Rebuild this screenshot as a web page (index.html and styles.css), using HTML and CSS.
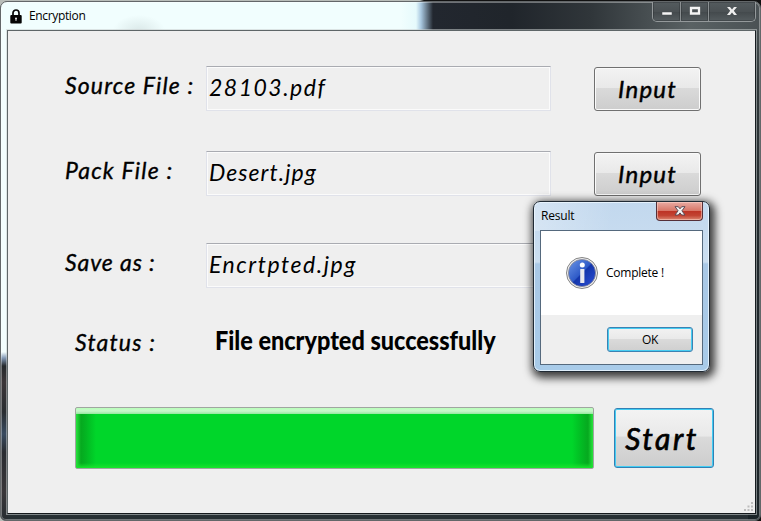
FILE: index.html
```html
<!DOCTYPE html>
<html lang="en">
<head>
<meta charset="utf-8">
<title>Encryption</title>
<link rel="stylesheet" href="styles.css">
</head>
<body>
<div class="window">
  <header class="titlebar">
    <svg class="lock" width="12" height="15" viewBox="0 0 12 15"><path d="M3 7V4a3 3 0 0 1 6 0v3" fill="none" stroke="#050505" stroke-width="1.7"/><rect x=".3" y="6" width="11.4" height="8.4" rx="1" fill="#050505"/><circle cx="6" cy="9.5" r="1" fill="#eee"/><path d="M5.5 10h1v2h-1z" fill="#ccc"/></svg>
    <span class="caption c-main">Encryption</span>
    <div class="controls">
      <span class="ctl"><svg width="12" height="14" viewBox="0 0 12 14"><path d="M1 10h10v3H1z" fill="#f4f4f4" stroke="#454b4f" stroke-width=".5"/></svg></span>
      <span class="ctl"><svg width="12" height="14" viewBox="0 0 12 14"><path d="M2 6h8v5.500H2z" fill="none" stroke="#f4f4f4" stroke-width="2.300"/></svg></span>
      <span class="ctl wide"><svg width="12" height="14" viewBox="0 0 12 14"><path d="M1 5h3l2 2.400L8 5h3L7.800 8.800 11 13H8L6 10.500 4 13H1l3.200-4.200z" fill="#eee"/></svg></span>
    </div>
  </header>
  <main class="client">
    <div class="row r1"><label class="label l1">Source File :</label><div class="field"><span class="v1">28103.pdf</span></div><button class="btn">Input</button></div>
    <div class="row r2"><label class="label l2">Pack File :</label><div class="field"><span class="v2">Desert.jpg</span></div><button class="btn">Input</button></div>
    <div class="row r3"><label class="label l3">Save as :</label><div class="field"><span class="v3">Encrtpted.jpg</span></div></div>
    <div class="status"><label class="label l4">Status :</label><span class="message">File encrypted successfully</span></div>
    <div class="action"><div class="progress"></div><button class="btn start">Start</button></div>
    <svg class="grip" width="9" height="9" viewBox="0 0 9 9"><path d="M7 0h2v2H7zM7 3.500h2v2H7zM3.500 3.500h2v2h-2zM7 7h2v2H7zM3.500 7h2v2h-2zM0 7h2v2H0z" fill="#bdbdbd"/></svg>
  </main>
</div>
<section class="dialog">
  <header class="dialog-bar"><span class="caption c-result">Result</span>
    <span class="close"><svg width="12" height="10" viewBox="0 0 12 10"><path d="M1 .7h3.300L6 2.800 7.700.7H11L7.900 4.800 11 9H7.700L6 6.900 4.300 9H1l3.100-4.200z" fill="#f4f4f4" stroke="#5c4b55" stroke-width="1"/></svg></span></header>
  <div class="dialog-client">
    <div class="dialog-body">
      <svg width="32" height="32" viewBox="0 0 32 32">
        <defs><linearGradient id="blue" x2="1" y2="1"><stop offset="0" stop-color="#6f98e6"/><stop offset=".48" stop-color="#2f5bc8"/><stop offset=".52" stop-color="#1436ab"/><stop offset="1" stop-color="#2d50d6"/></linearGradient></defs>
        <circle cx="16" cy="16" r="15.500" fill="#f1f1f1" stroke="#777" stroke-width=".9"/><circle cx="16" cy="16" r="13.600" fill="url(#blue)" stroke="#8a8a96" stroke-width=".8"/>
        <circle cx="16.300" cy="8" r="2.500" fill="#fff"/><rect x="14.200" y="12" width="4.200" height="14" rx=".6" fill="#e9e9ee"/>
      </svg>
      <span class="caption c-msg">Complete !</span>
    </div>
    <footer class="dialog-foot"><button class="ok">OK</button></footer>
  </div>
</section>
</body>
</html>
```
FILE: styles.css
```css
* { box-sizing: border-box; }
body {
  margin: 0; width: 761px; height: 521px; overflow: hidden; position: relative;
  background: linear-gradient(90deg, #b9bdb9 0 420px, #111 424px);
}
.window {
  margin-top: 1px; width: 761px; height: 520px; padding: 0 4px 6px 6px;
  border: 1px solid #636769; border-radius: 7px 7px 6px 6px;
  background:
    radial-gradient(ellipse 26px 16px at 138px 29px, rgba(200,215,215,.55), transparent) 0 0 / 100% 29px no-repeat,
    linear-gradient(90deg, #f1fefe 0 400px, #e6fafc 415px, #a9c8e0 420px, #22272f 432px, #20252b 510px, #30363a 590px, #596163 690px, #4a5154 761px) 0 0 / 100% 29px no-repeat,
    linear-gradient(#525a5c, #30383a 80px, #20282c 260px, #1b2428 100%) 100% 0 / 12px 100% no-repeat,
    linear-gradient(#f2fdfd 0 350px, #8298b5 356px, #25292c 364px, #3b3538 380px, #292d31 410px, #394b60 432px, #292c31 450px, #393639 490px, #272d31) 0 0 / 7px 100% no-repeat,
    #272f33;
  box-shadow: inset 0 0 0 1px rgba(255,255,255,.35);
}
.titlebar { height: 28px; display: flex; align-items: flex-start; padding-left: 3px; }
.lock { margin: 7px 7px 0 0; }
.caption { font: 12px/16px "Open Sans", "Noto Sans", sans-serif; color: #000; white-space: nowrap; }
.c-main { margin-top: 6px; letter-spacing: -.35px; }
.controls { margin: 0 0 0 auto; width: 104px; height: 20px; display: flex; border: 1px solid #94999b; border-top: 0; border-radius: 0 0 5px 5px; overflow: hidden; background: linear-gradient(#545b5e, #4b5154 50%, #43494c 51%, #555c5f); }
.ctl { width: 28px; display: flex; justify-content: center; border-right: 1px solid #8b9092; box-shadow: inset 0 0 0 1px rgba(30,34,36,.3); }
.ctl.wide { flex: 1; border: 0; }
.client {
  position: relative; width: 749px; height: 484px; border: 1px solid #6b7375; border-color: #5e6668 #161c20 #15191c #5e6668;
  outline: 1px solid rgba(200,205,206,.55); outline-offset: 0;
  background: #efefef; padding: 35px 0 0 57px; font-family: Lato, "Open Sans", sans-serif; color: #000;
}
.row { display: grid; grid-template-columns: 141px 345px 107px; height: 45px; }
.row .btn { margin: 1px -43px 0 43px; }
.r1 { margin-bottom: 40px; }
.r2 { margin-bottom: 47px; }
.r3 { margin-bottom: 34px; }
.label { font-style: italic; font-weight: 400; font-size: 23px; line-height: 30px; white-space: nowrap; align-self: start; -webkit-text-stroke: .35px #000; }
.row .label { margin-top: 4px; }
.l1 { letter-spacing: 1.15px; }
.l2 { letter-spacing: 1.2px; }
.l3 { letter-spacing: .9px; }
.l4 { letter-spacing: 1.2px; }
.field { border: 1px solid #e0e2ea; border-top-color: #a9abb1; box-shadow: inset 0 0 0 1px #fbfbfb; padding: 5px 0 0 2px; font-size: 23px; line-height: 30px; font-style: italic; white-space: nowrap; }
.v1 { letter-spacing: 1.5px; }
.v2 { letter-spacing: 1.05px; }
.v3 { letter-spacing: 1.55px; }
.btn {
  width: 107px; height: 44px; border: 1px solid #707070; border-radius: 3px; padding: 0;
  background: linear-gradient(#f3f3f3, #e9e9e9 47%, #dadada 48%, #cdcdcd); box-shadow: inset 0 0 0 1px #fafafa;
  font: italic 400 24px/30px Lato, sans-serif; -webkit-text-stroke: .45px #000; letter-spacing: 1.2px; color: #000;
}
.status { display: flex; height: 36px; padding-left: 10px; margin-bottom: 49px; }
.l4 { width: 140px; margin-top: 5px; }
.message { font: 900 27px/36px Lato, sans-serif; transform: scaleX(.868); transform-origin: 0 50%; white-space: nowrap; }
.action { display: flex; align-items: flex-start; padding-left: 10px; gap: 20px; }
.progress {
  width: 519px; height: 62px; border: 1px solid #a0a6a0; border-radius: 2px;
  background: linear-gradient(#b9ffba, #c8f6cb 3px, #96e79f 6px, transparent 6px), linear-gradient(transparent 55px, #18e52c 60px), linear-gradient(90deg, #28e43e, #06a91f 5px, #03b622 10px, #00d62a 20px, #00d62a 496px, #03b622 507px, #06a91f 512px, #28e43e);
}
.btn.start { width: 100px; height: 60px; margin-top: 1px; border-color: #3280b4; box-shadow: inset 0 0 0 1px #42cdf3; font-size: 30px; -webkit-text-stroke-width: .7px; letter-spacing: 2.5px; padding-right: 4px; }
.grip { position: absolute; right: 2px; bottom: 2px; }
.dialog {
  position: absolute; left: 533px; top: 201px; width: 177px; height: 171px; padding: 0 6px 6px;
  border: 1px solid #202a34; border-radius: 7px;
  background: linear-gradient(100deg, rgba(255,255,255,.3), transparent 45%) 0 0 / 100% 29px no-repeat, linear-gradient(#c2d8ee, #cbdef0 60px, #a9c8e6 62px, #a8cbe9);
  box-shadow: inset 0 0 0 1px rgba(238,248,255,.8), 2px 3px 9px 3px rgba(0,0,0,.75);
}
.dialog-bar { display: flex; height: 28px; }
.c-result { margin: 6px 0 0 1px; letter-spacing: -.2px; }
.close { margin-left: auto; width: 47px; height: 19px; display: flex; justify-content: center; align-items: center; border: 1px solid #553039; border-top: 0; border-radius: 0 0 4px 4px; background: linear-gradient(#e9aba3, #d87768 48%, #bd3224 50%, #c24332 75%, #dc8772); box-shadow: inset 0 0 0 1px rgba(255,220,210,.5); }
.dialog-client { border: 1px solid #55697d; height: 135px; background: #fff; }
.dialog-body { height: 84px; padding-left: 25px; display: flex; align-items: center; gap: 8px; }
.c-msg { letter-spacing: -.25px; }
.dialog-foot { height: 49px; background: #efefef; display: flex; padding: 12px 9px 0 0; justify-content: flex-end; }
.ok { width: 86px; height: 25px; padding: 0; border: 1px solid #3b82b3; border-radius: 3px; background: linear-gradient(#f2f2f2, #e9e9e9 48%, #dadada 50%, #cfcfcf); box-shadow: inset 0 0 0 1px #46cdf2; font: 12px/16px "Open Sans", sans-serif; letter-spacing: -.4px; color: #000; }
```
